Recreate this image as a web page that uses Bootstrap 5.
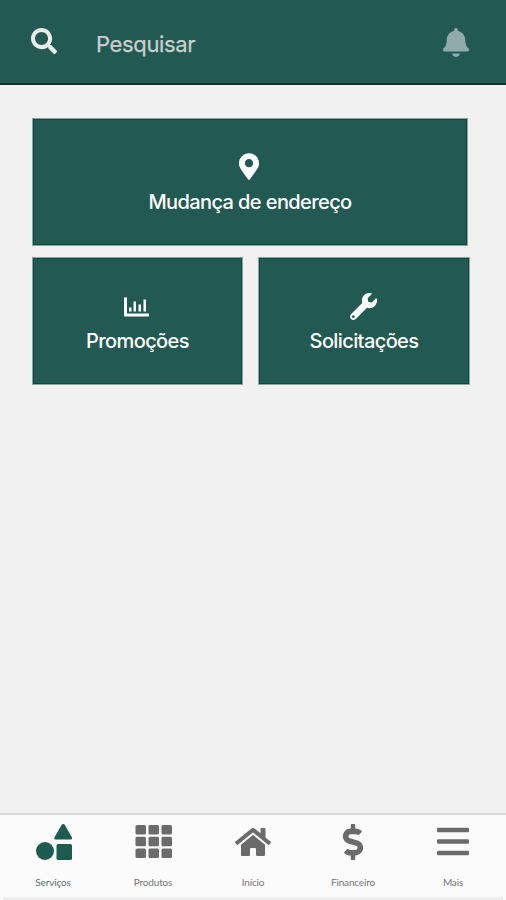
<!DOCTYPE html>
<html lang="pt-BR">
<head>
<meta charset="utf-8">
<meta name="viewport" content="width=device-width, initial-scale=1">
<title>Serviços</title>
<link href="https://cdn.jsdelivr.net/npm/bootstrap@5.3.0/dist/css/bootstrap.min.css" rel="stylesheet">
<style>
body{font-family:Inter,"Liberation Sans",sans-serif;background:#f1f1f1}
svg{display:block;fill:currentColor;flex:none}
.app{height:900px;overflow:hidden}
.topbar{height:85px;background:#225953;border-bottom:2px solid #0b3327;padding:0 37px 0 31px;color:#e8eeec}
.topbar .glass{margin-top:-2px}
.query{font-size:22px;letter-spacing:-.35px;line-height:30px;margin:5px 0 0 39px;color:#c8d0ce;-webkit-text-stroke:.25px}
.bell{color:#91abaa;margin-top:1px}
.services{padding:33px 38px 0 32px}
.tile{height:128px;background:#225953;border:1px solid #8da5a1;box-shadow:inset 0 0 0 1px #0d4c43;border-radius:0;color:#fff;font-weight:500;font-size:20px;line-height:28px;letter-spacing:-.6px;padding-top:34px}
.tile:hover{color:#fff}
.tile svg{margin:0 1px 8px 0}
.tile .pin{margin-right:2px}
.pair{display:grid;grid-template-columns:211px 212px;gap:15px;margin:11px -2px 0 0}
.pair .tile svg{margin:1px 2px 7px 0}
.t1{letter-spacing:-.6px}
.tabs{height:87px;background:#fbfbfb;border-top:2px solid #d6d6d6;padding:9px 3px 0}
.tabs a{width:100px;color:#6b6b6b;font-family:Lato,sans-serif;font-size:10px;line-height:14px}
.tabs a span{margin-top:15px;letter-spacing:-.15px;color:#777}
.tabs a.current{color:#1d5b51}
.tabs a.current span{color:#58736c}
.homebar{height:3px;background:#eee;margin:auto 0 2px}
</style>
</head>
<body>
<div class="app d-flex flex-column">
<header class="topbar d-flex align-items-center flex-shrink-0">
<svg class="glass" width="26" height="26" viewBox="0 0 512 512"><path d="M505 442.700L405.300 343c-4.500-4.500-10.600-7-17-7H372c27.600-35.300 44-79.700 44-128C416 93.100 322.900 0 208 0S0 93.100 0 208s93.100 208 208 208c48.300 0 92.700-16.400 128-44v16.300c0 6.400 2.500 12.500 7 17l99.700 99.700c9.400 9.400 24.600 9.400 33.900 0l28.300-28.300c9.400-9.400 9.400-24.600.1-34zM208 336c-70.700 0-128-57.200-128-128 0-70.700 57.200-128 128-128 70.700 0 128 57.200 128 128 0 70.700-57.200 128-128 128z"/></svg>
<span class="query">Pesquisar</span>
<svg class="bell ms-auto" width="26" height="29" viewBox="0 0 448 512" preserveAspectRatio="none"><path d="M224 512c35.320 0 63.970-28.650 63.970-64H160.030c0 35.350 28.650 64 63.970 64zm215.390-149.710c-19.320-20.760-55.470-51.990-55.470-154.290 0-77.700-54.480-139.900-127.940-155.160V32c0-17.670-14.320-32-31.980-32s-31.980 14.330-31.980 32v20.840C118.560 68.100 64.080 130.300 64.080 208c0 102.300-36.150 133.530-55.470 154.290-6 6.450-8.660 14.160-8.610 21.710.11 16.400 12.980 32 32.100 32h383.800c19.120 0 32-15.600 32.100-32 .05-7.550-2.610-15.270-8.610-21.710z"/></svg>
</header>
<main class="services">
<a class="tile btn d-flex flex-column align-items-center pb-0" href="#">
<svg class="pin" width="20" height="27" viewBox="0 0 384 512"><path fill-rule="evenodd" d="M172.268 501.670C26.970 291.031 0 269.413 0 192 0 85.961 85.961 0 192 0s192 85.961 192 192c0 77.413-26.970 99.031-172.268 309.670-9.535 13.774-29.930 13.773-39.464 0zM192 272c44.183 0 80-35.817 80-80s-35.817-80-80-80-80 35.817-80 80 35.817 80 80 80z"/></svg>
<span class="t1">Mudança de endereço</span></a>
<div class="pair">
<a class="tile btn d-flex flex-column align-items-center pb-0" href="#">
<svg width="27" height="27" viewBox="0 0 27 27"><path d="M1 4.500h3v16h22v3H2q-1 0-1-1zM6 14.500h2.500v4H6zM10.500 8.500h2.500v10h-2.500zM15.500 11.500h2.500v7h-2.500zM20.500 6.500H23v12h-2.500z"/></svg>
<span>Promoções</span></a>
<a class="tile btn d-flex flex-column align-items-center pb-0" href="#">
<svg width="27" height="27" viewBox="0 0 512 512"><path d="M507.730 109.100c-2.240-9.030-13.540-12.090-20.120-5.510l-74.360 74.360-67.880-11.310-11.310-67.880 74.360-74.360c6.620-6.620 3.430-17.900-5.660-20.160-47.380-11.740-99.550.91-136.580 37.930-39.640 39.640-50.550 97.100-34.050 147.200L18.740 402.760c-24.990 24.990-24.990 65.510 0 90.500 24.990 24.990 65.510 24.990 90.500 0l213.210-213.210c50.120 16.710 107.470 5.680 147.370-34.220 37.070-37.070 49.700-89.320 37.910-136.730zM64 472c-13.250 0-24-10.750-24-24 0-13.260 10.750-24 24-24s24 10.740 24 24c0 13.250-10.750 24-24 24z"/></svg>
<span>Solicitações</span></a>
</div>
</main>
<nav class="tabs d-flex flex-wrap mt-auto flex-shrink-0 align-content-start">
<a class="current text-decoration-none d-flex flex-column align-items-center" href="#">
<svg width="38" height="36" viewBox="-1 0 38 36"><circle cx="10" cy="27" r="9"/><rect x="21.500" y="20" width="15.500" height="16" rx="1.500"/><path d="M27.500.8q1.500-1.600 3 0l7.300 12.700q.5 1.800-1.300 2H21.500q-1.800-.2-1.300-2z" transform="translate(-.8)"/></svg>
<span>Serviços</span></a>
<a class="text-decoration-none d-flex flex-column align-items-center" href="#">
<svg width="38" height="36" viewBox="0 0 38 36"><g id="r"><rect x="1.500" y="1" width="10.500" height="9.500" rx="1.500"/><rect x="14.500" y="1" width="10.500" height="9.500" rx="1.500"/><rect x="27.500" y="1" width="10.500" height="9.500" rx="1.500"/></g><use href="#r" y="11.700"/><use href="#r" y="23.400"/></svg>
<span>Produtos</span></a>
<a class="text-decoration-none d-flex flex-column align-items-center" href="#">
<svg width="36" height="36" viewBox="0 -32 576 576"><path d="M280.370 148.260L96 300.110V464a16 16 0 0 0 16 16l112.060-.29a16 16 0 0 0 15.920-16V368a16 16 0 0 1 16-16h64a16 16 0 0 1 16 16v95.640a16 16 0 0 0 16 16.050L464 480a16 16 0 0 0 16-16V300L295.670 148.260a12.190 12.190 0 0 0-15.300 0zM571.600 251.470L488 182.560V44.050a12 12 0 0 0-12-12h-56a12 12 0 0 0-12 12v72.610L318.470 43a48 48 0 0 0-61 0L4.340 251.470a12 12 0 0 0-1.600 16.900l25.500 31A12 12 0 0 0 45.150 301l235.220-193.740a12.190 12.190 0 0 1 15.300 0L530.900 301a12 12 0 0 0 16.900-1.600l25.500-31a12 12 0 0 0-1.700-16.930z"/></svg>
<span>Início</span></a>
<a class="text-decoration-none d-flex flex-column align-items-center" href="#">
<svg width="22" height="36" viewBox="0 0 288 512"><path d="M209.200 233.400l-108-31.600C88.700 198.200 80 186.500 80 173.500c0-16.300 13.200-29.500 29.500-29.500h66.300c12.200 0 24.200 3.700 34.200 10.500 6.100 4.100 14.300 3.100 19.500-2l34.800-34c7.100-6.900 6.100-18.400-1.800-24.500C238 74.800 207.400 64.100 176 64V16c0-8.800-7.200-16-16-16h-32c-8.800 0-16 7.200-16 16v48h-2.500C45.800 64-5.400 118.700.5 183.600c4.200 46.100 39.400 83.600 83.800 96.600l102.500 30c12.500 3.700 21.200 15.300 21.200 28.300 0 16.300-13.200 29.500-29.500 29.500h-66.300C100 368 88 364.300 78 357.500c-6.100-4.100-14.300-3.100-19.500 2l-34.800 34c-7.100 6.900-6.100 18.400 1.800 24.500 24.500 19.200 55.100 29.900 86.500 30v48c0 8.800 7.200 16 16 16h32c8.800 0 16-7.200 16-16v-48.200c46.600-.9 90.300-28.600 105.700-72.700 21.500-61.600-14.600-124.800-72.500-141.700z"/></svg>
<span>Financeiro</span></a>
<a class="text-decoration-none d-flex flex-column align-items-center" href="#">
<svg width="32" height="36" viewBox="0 0 32 36"><rect y="3.800" width="32" height="4.500" rx="1.200"/><rect y="15.300" width="32" height="4.500" rx="1.200"/><rect y="26.800" width="32" height="4.500" rx="1.200"/></svg>
<span>Mais</span></a>
<div class="homebar w-100 mt-2"></div>
</nav>
</div>
<script src="https://cdn.jsdelivr.net/npm/bootstrap@5.3.0/dist/js/bootstrap.bundle.min.js"></script>
</body>
</html>
